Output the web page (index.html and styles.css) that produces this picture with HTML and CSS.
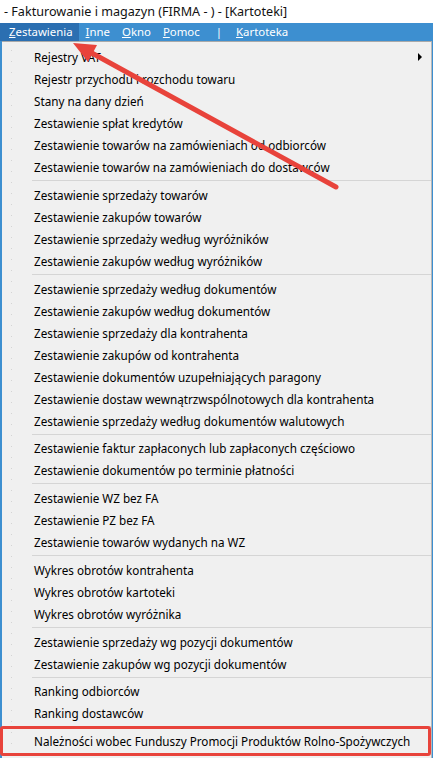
FILE: index.html
```html
<!DOCTYPE html>
<html>
<head>
<meta charset="UTF-8">
<meta name="viewport" content="width=device-width, initial-scale=1.0">
<title>Fakturowanie i magazyn</title>
<link rel="stylesheet" href="styles.css">
</head>
<body>
	<!-- Title bar -->
	<div class="title-bar">- Fakturowanie i magazyn (FIRMA - ) - [Kartoteki]</div>

	<!-- Menu bar -->
	<div class="menu-bar">
		<span class="menu-item active"><u>Z</u>estawienia</span>
		<span class="menu-item"><u>I</u>nne</span>
		<span class="menu-item"><u>O</u>kno</span>
		<span class="menu-item"><u>P</u>omoc</span>
		<span class="menu-item pipe">|</span>
		<span class="menu-item"><u>K</u>artoteka</span>
	</div>

	<!-- Dropdown -->
	<div class="dropdown-wrap">
		<div class="dropdown">
			<div class="item has-sub">Rejestry VAT</div>
			<div class="item">Rejestr przychodu i rozchodu towaru</div>
			<div class="item">Stany na dany dzień</div>
			<div class="item">Zestawienie spłat kredytów</div>
			<div class="item">Zestawienie towarów na zamówieniach od odbiorców</div>
			<div class="item">Zestawienie towarów na zamówieniach do dostawców</div>
			<div class="sep"></div>
			<div class="item">Zestawienie sprzedaży towarów</div>
			<div class="item">Zestawienie zakupów towarów</div>
			<div class="item">Zestawienie sprzedaży według wyróżników</div>
			<div class="item">Zestawienie zakupów według wyróżników</div>
			<div class="sep"></div>
			<div class="item">Zestawienie sprzedaży według dokumentów</div>
			<div class="item">Zestawienie zakupów według dokumentów</div>
			<div class="item">Zestawienie sprzedaży dla kontrahenta</div>
			<div class="item">Zestawienie zakupów od kontrahenta</div>
			<div class="item">Zestawienie dokumentów uzupełniających paragony</div>
			<div class="item">Zestawienie dostaw wewnątrzwspólnotowych dla kontrahenta</div>
			<div class="item">Zestawienie sprzedaży według dokumentów walutowych</div>
			<div class="sep"></div>
			<div class="item">Zestawienie faktur zapłaconych lub zapłaconych częściowo</div>
			<div class="item">Zestawienie dokumentów po terminie płatności</div>
			<div class="sep"></div>
			<div class="item">Zestawienie WZ bez FA</div>
			<div class="item">Zestawienie PZ bez FA</div>
			<div class="item">Zestawienie towarów wydanych na WZ</div>
			<div class="sep"></div>
			<div class="item">Wykres obrotów kontrahenta</div>
			<div class="item">Wykres obrotów kartoteki</div>
			<div class="item">Wykres obrotów wyróżnika</div>
			<div class="sep"></div>
			<div class="item">Zestawienie sprzedaży wg pozycji dokumentów</div>
			<div class="item">Zestawienie zakupów wg pozycji dokumentów</div>
			<div class="sep"></div>
			<div class="item">Ranking odbiorców</div>
			<div class="item">Ranking dostawców</div>
			<div class="sep"></div>
			<div class="item marked">Należności wobec Funduszy Promocji Produktów Rolno-Spożywczych</div>
		</div>
	</div>

	<!-- Annotation arrow -->
	<svg class="arrow" width="433" height="758" viewBox="0 0 433 758">
		<line x1="336" y1="187" x2="90" y2="52" stroke="#e8433b" stroke-width="5" stroke-linecap="round" />
		<polygon points="73,43 97,45 88,62" fill="#e8433b" />
	</svg>
</body>
</html>
```

FILE: styles.css
```css
body {
	font-family: "Noto Sans", "Open Sans", sans-serif;
	font-size: 11.7px;
	margin: 0;
	padding: 0;
	background-color: #fff;
	color: #000;
	width: 433px;
	height: 758px;
	overflow: hidden;
}

/* Title bar */
.title-bar {
	height: 23px;
	line-height: 23px;
	padding-left: 4px;
	font-size: 12.6px;
	color: #111;
}

/* Menu bar */
.menu-bar {
	display: flex;
	height: 18px;
	background-color: #3d8fd0;
	color: #fff;
	font-size: 11.4px;
}

.menu-item {
	padding: 0 5px 0 7px;
	line-height: 18px;
	white-space: nowrap;
}

.menu-item.active {
	background-color: #2b6fb1;
	padding: 0 6px 0 9px;
}

.menu-item.pipe {
	padding: 0 7px 0 11px;
}

.menu-item u {
	text-underline-offset: 1px;
}

/* Dropdown */
.dropdown-wrap {
	background-color: #3d8fd0;
	padding: 0 1px 0 2px;
	height: 717px;
}

.dropdown {
	background-color: #f0f0f0;
	border-top: 1px solid #a9a9a9;
	border-right: 1px solid #b8b8b8;
	padding-top: 4px;
	height: 712px;
	background-image: radial-gradient(circle, #d4d4d4 0.6px, transparent 0.9px);
	background-size: 11px 11px;
	background-position: 4px 3px;
	background-repeat: repeat-y;
}

.item {
	position: relative;
	height: 22px;
	line-height: 22px;
	padding-left: 32px;
	white-space: nowrap;
	background: linear-gradient(to right, transparent 29px, #f0f0f0 29px);
}

.item.has-sub::after {
	content: "";
	position: absolute;
	right: 9px;
	top: 7px;
	border-left: 4px solid #000;
	border-top: 4px solid transparent;
	border-bottom: 4px solid transparent;
}

.sep {
	height: 5.75px;
	margin-left: 30px;
	background: linear-gradient(#d5d5d5, #d5d5d5) no-repeat 0 2px / 100% 1px;
}

.item.marked::before {
	content: "";
	position: absolute;
	left: -2px;
	right: 0;
	top: -4px;
	bottom: -4px;
	border: 3px solid #e8433b;
	border-radius: 3px;
}

/* Annotation overlay */
.arrow {
	position: absolute;
	left: 0;
	top: 0;
	pointer-events: none;
}
```
